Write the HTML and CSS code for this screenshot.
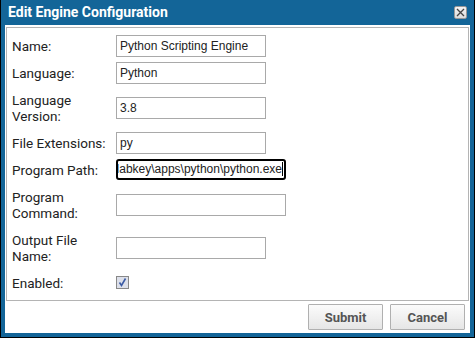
FILE: index.html
```html
<!DOCTYPE html>
<html lang="en">
<head>
    <meta charset="UTF-8">
    <title>Edit Engine Configuration</title>
    <link rel="stylesheet" href="styles.css">
</head>
<body>
    <div class="window">
        <div class="titlebar">
            <span class="title">Edit Engine Configuration</span>
            <span class="close">
                <svg width="11" height="11" viewBox="0 0 11 11"><path d="M2 2 L9 9 M9 2 L2 9" stroke="#444" stroke-width="1.3" fill="none"/></svg>
            </span>
        </div>
        <div class="content">
            <div class="panel">
                <div class="form">
                    <label class="lbl">Name:</label>
                    <div class="field">Python Scripting Engine</div>

                    <label class="lbl">Language:</label>
                    <div class="field">Python</div>

                    <label class="lbl">Language Version:</label>
                    <div class="field">3.8</div>

                    <label class="lbl">File Extensions:</label>
                    <div class="field">py</div>

                    <label class="lbl">Program Path:</label>
                    <div class="field wide focused"><span class="scroll">labkey\apps\python\python.exe<span class="caret"></span></span></div>

                    <label class="lbl">Program Command:</label>
                    <div class="field wide"></div>

                    <label class="lbl">Output File Name:</label>
                    <div class="field"></div>

                    <label class="lbl">Enabled:</label>
                    <div class="check">
                        <svg width="11" height="11" viewBox="0 0 11 11"><path d="M2.5 5.5 L4.5 8.5 L8.5 1.5" stroke="#3b5ba5" stroke-width="1.6" fill="none"/></svg>
                    </div>
                </div>
            </div>
            <div class="footer">
                <button class="btn">Submit</button>
                <button class="btn">Cancel</button>
            </div>
        </div>
    </div>
</body>
</html>
```

FILE: styles.css
```css
body {
    margin: 0;
    font-family: Roboto, "Liberation Sans", sans-serif;
    font-size: 13.5px;
    color: #222;
    background: #fff;
}

.window {
    width: 475px;
    height: 338px;
    box-sizing: border-box;
    border: 1px solid #000;
    border-top: none;
    background-color: #136598;
    padding: 0 4px 4px;
    display: flex;
    flex-direction: column;
}

.titlebar {
    height: 25px;
    display: flex;
    align-items: center;
    justify-content: space-between;
    padding: 0 3px 0 3px;
}

.title {
    color: #fff;
    font-weight: bold;
    font-size: 14px;
    margin-top: -1px;
}

.close {
    width: 11px;
    height: 11px;
    border: 1px solid #999;
    border-radius: 2px;
    background: linear-gradient(#f4f4f4, #dcdcdc);
    display: flex;
    margin-top: -1px;
}

.content {
    flex: 1;
    background: #fff;
    padding: 2px 1px 0;
    display: flex;
    flex-direction: column;
}

.panel {
    border: 1px solid #b4b4b4;
    padding: 4px 5px;
}

.form {
    display: grid;
    grid-template-columns: 104px auto;
    align-items: center;
}

.lbl {
    line-height: 16px;
    padding: 5.5px 10px 5.5px 0;
}

.field {
    width: 150px;
    height: 22px;
    box-sizing: border-box;
    border: 1px solid #a9a9a9;
    padding: 0 3px;
    font-family: "Liberation Sans", Arial, sans-serif;
    font-size: 12px;
    line-height: 20px;
    white-space: nowrap;
    overflow: hidden;
}

.field.wide {
    width: 170px;
}

.focused {
    border: 2px solid #000;
    border-radius: 3px;
    line-height: 17px;
    padding: 0 1px;
    display: flex;
    justify-content: flex-end;
    height: 21px;
}

.scroll {
    white-space: nowrap;
}

.caret {
    display: inline-block;
    width: 1px;
    height: 14px;
    background: #000;
    vertical-align: -3px;
}

.check {
    width: 11px;
    height: 11px;
    border: 1px solid #888;
    background: #dde0ea;
    display: flex;
}

.footer {
    display: flex;
    justify-content: flex-end;
    gap: 7px;
    padding: 3px 4px 0 0;
}

.btn {
    width: 75px;
    height: 26px;
    border: 1px solid #b0b0b0;
    border-radius: 1px;
    background: linear-gradient(#fbfbfb, #e6e6e6);
    font-family: Roboto, "Liberation Sans", sans-serif;
    font-weight: bold;
    font-size: 13px;
    color: #555;
    padding: 0;
}
```
